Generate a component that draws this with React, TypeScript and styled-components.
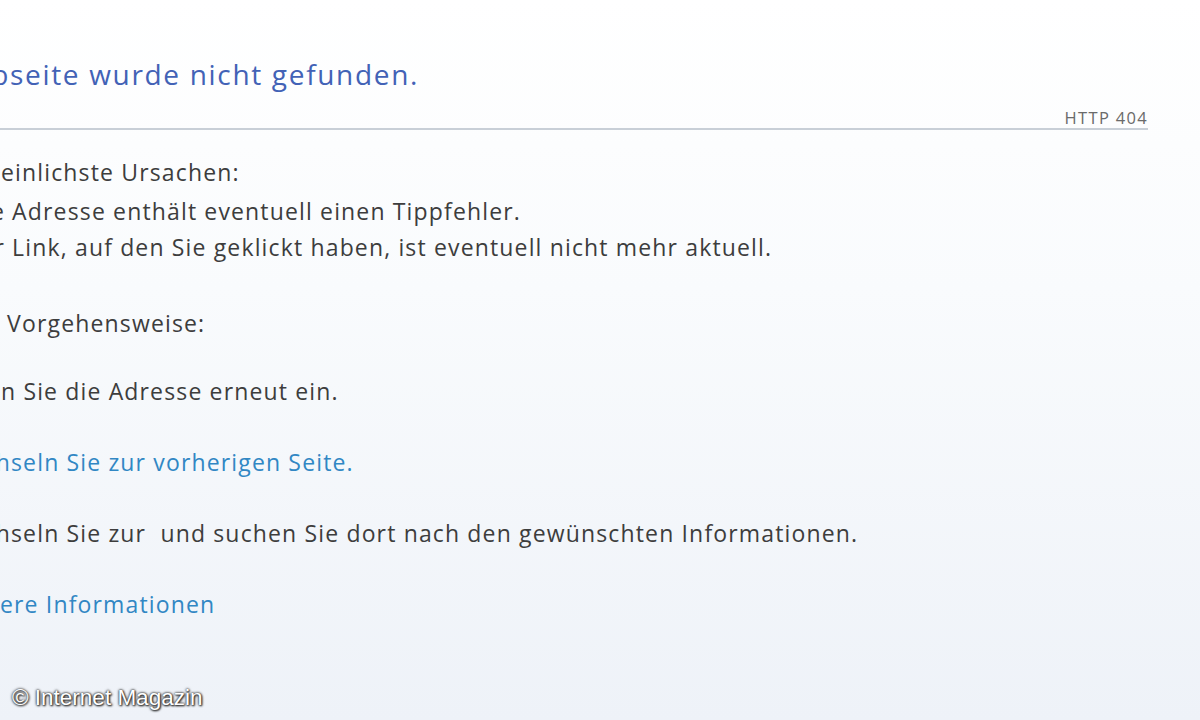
import * as React from 'react';
import styled, { createGlobalStyle } from 'styled-components';

const GlobalStyle = createGlobalStyle`
  html, body {
    margin: 0;
    padding: 0;
  }
  body {
    font-family: 'Open Sans', 'Noto Sans', sans-serif;
  }
`;

const causes = [
  { hidden: 'Die', shown: ' Adresse enthält eventuell einen Tippfehler.' },
  { hidden: 'Der', shown: ' Link, auf den Sie geklickt haben, ist eventuell nicht mehr aktuell.' },
];

const actions = [
  { hidden: 'Gebe', shown: 'n Sie die Adresse erneut ein.', start: 1, link: false },
  { hidden: 'Wech', shown: 'seln Sie zur vorherigen Seite.', start: 11, link: true },
  {
    hidden: 'Wech',
    shown: 'seln Sie zur  und suchen Sie dort nach den gewünschten Informationen.',
    start: 11,
    link: false,
  },
];

// the left edge of the page is cut off in the shot, so each line keeps its
// hidden start in a zero-width span that spills out to the left
const Line: React.FC<{ hidden: string; shown: string }> = ({ hidden, shown }) => (
  <>
    <Hidden>{hidden}</Hidden>
    <Shown>{shown}</Shown>
  </>
);

const App: React.FC = () => (
  <Page>
    <GlobalStyle />
    <Content>
      <Title $start={10}>
        <Line hidden="Die Web" shown="seite wurde nicht gefunden." />
      </Title>
      <Status>HTTP 404</Status>
      <Rule />

      <SectionTitle $start={1} $gap={24}>
        <Line hidden="Wahrsch" shown="einlichste Ursachen:" />
      </SectionTitle>
      <List>
        {causes.map(item => (
          <Item key={item.shown} $start={5}>
            <Line hidden={item.hidden} shown={item.shown} />
          </Item>
        ))}
      </List>

      <SectionTitle $start={0} $gap={40}>
        <Line hidden="Empfohlene" shown=" Vorgehensweise:" />
      </SectionTitle>
      <Actions>
        {actions.map(item => (
          <Action key={item.shown} $start={item.start} $link={item.link}>
            <Line hidden={item.hidden} shown={item.shown} />
          </Action>
        ))}
      </Actions>

      <More $start={0}>
        <Line hidden="Weit" shown="ere Informationen" />
      </More>
    </Content>

    <Watermark>© Internet Magazin</Watermark>
  </Page>
);

export default App;

const Page = styled.div`
  position: relative;
  width: 1200px;
  height: 720px;
  overflow: hidden;
  background: linear-gradient(180deg, #ffffff 0%, #f9fbfd 40%, #eef2f8 100%);
`;

const Content = styled.div`
  width: 1148px;
  padding-top: 54px;
  display: flex;
  flex-direction: column;
`;

const Hidden = styled.span`
  display: inline-block;
  width: 0;
  direction: rtl;
  white-space: pre;
`;

const Shown = styled.span`
  white-space: pre;
`;

const TextLine = styled.div<{ $start: number }>`
  padding-left: ${p => p.$start}px;
  white-space: pre;
  font-size: 23px;
  letter-spacing: 0.05em;
  line-height: 36px;
  color: #3d3d3d;
`;

const Title = styled(TextLine)`
  font-size: 28px;
  letter-spacing: 0.06em;
  line-height: 40px;
  color: #4262b6;
`;

const Status = styled.div`
  margin-top: 14px;
  text-align: right;
  font-size: 16.5px;
  letter-spacing: 0.08em;
  line-height: 20px;
  color: #6a6a6a;
`;

const Rule = styled.div`
  height: 2px;
  background: #c8cfd7;
`;

const SectionTitle = styled(TextLine)<{ $gap: number }>`
  margin-top: ${p => p.$gap}px;
`;

const List = styled.div`
  margin-top: 3px;
  display: flex;
  flex-direction: column;
`;

const Item = styled(TextLine)``;

const Actions = styled.div`
  margin-top: 32px;
  display: flex;
  flex-direction: column;
  gap: 35px;
`;

const Action = styled(TextLine)<{ $link: boolean }>`
  color: ${p => (p.$link ? '#3187c4' : '#3d3d3d')};
`;

const More = styled(TextLine)`
  margin-top: 35px;
  color: #3187c4;
`;

const Watermark = styled.div`
  position: absolute;
  left: 12px;
  bottom: 9px;
  font-family: 'Liberation Sans', Arial, sans-serif;
  font-size: 22.5px;
  color: #ffffff;
  text-shadow: 0 0 3px #333, 0 0 2px #333, 1px 1px 2px #222;
`;
